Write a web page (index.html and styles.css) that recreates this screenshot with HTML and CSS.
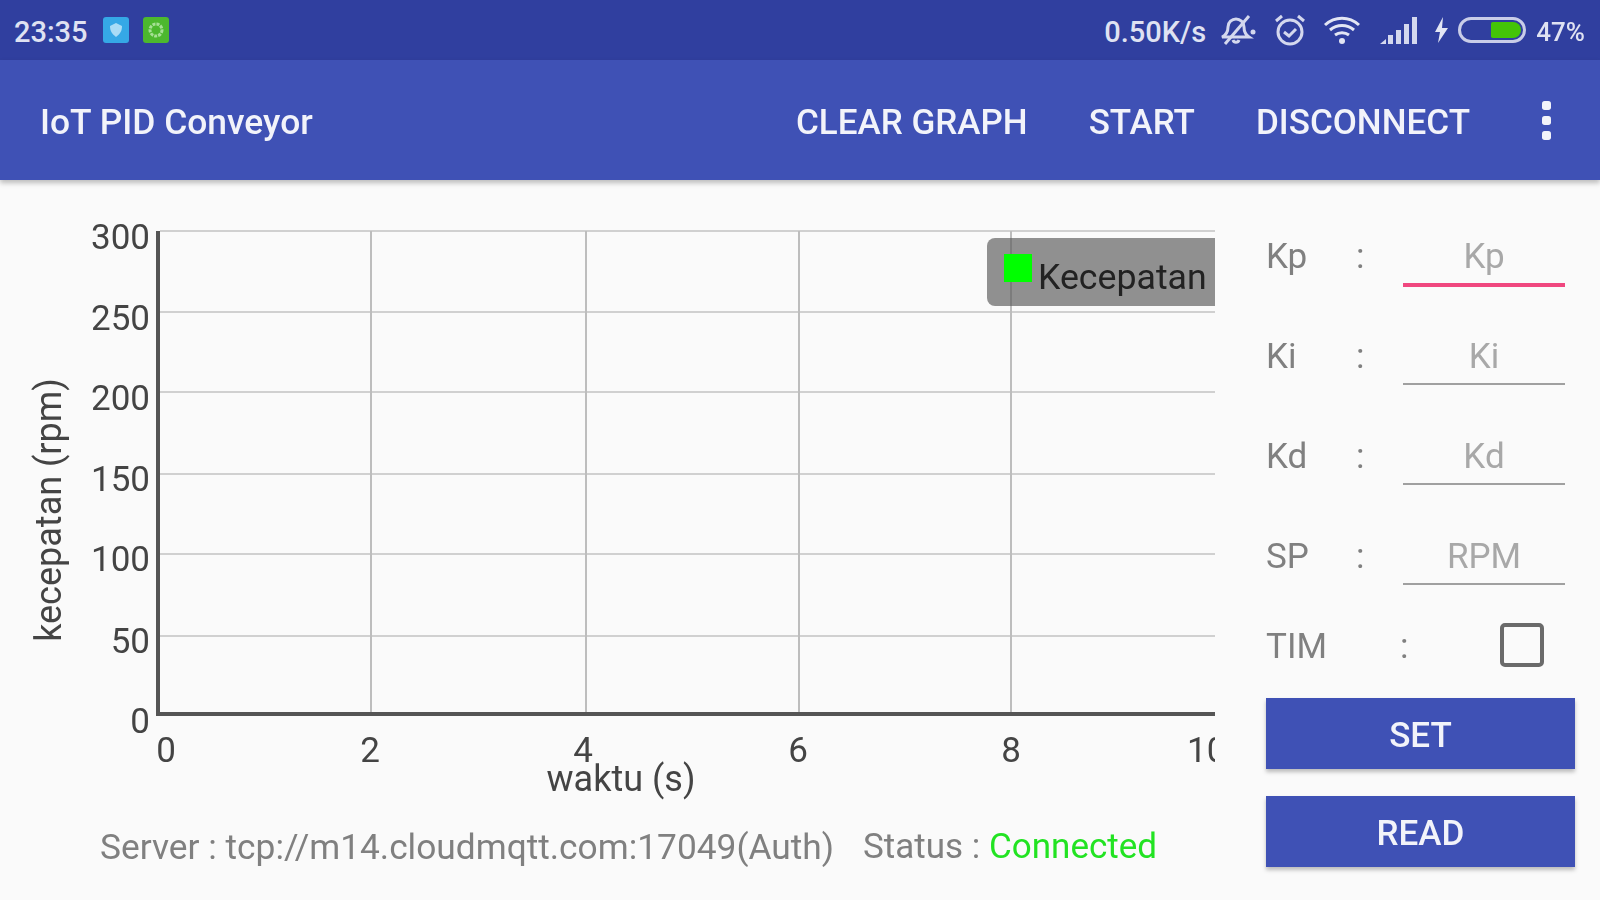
FILE: index.html

```html
<!DOCTYPE html>
<html lang="en">
<head>
    <meta charset="UTF-8">
    <title>IoT PID Conveyor</title>
    <link rel="stylesheet" href="styles.css">
</head>
<body>
    <div class="statusbar">
        <span class="clock">23:35</span>
        <svg class="notif" width="26" height="26" viewBox="0 0 26 26">
            <rect width="26" height="26" rx="3" fill="#35a8e6"/>
            <path d="M7 9l6-3 6 3c0 5-2 8-6 11-4-3-6-6-6-11z" fill="#a9dcf6"/>
        </svg>
        <svg class="notif" width="26" height="26" viewBox="0 0 26 26">
            <rect width="26" height="26" rx="3" fill="#4cb82e"/>
            <circle cx="13" cy="13" r="6" fill="none" stroke="#a5e094" stroke-width="3" stroke-dasharray="3 1"/>
        </svg>
        <div class="status-right">
            <span class="speed">0.50K/s</span>
            <svg width="38" height="34" viewBox="0 0 38 34" fill="none" stroke="#d4d8ee" stroke-width="3">
                <path d="M3 24c4-2 6-5 6-10 0-5 4-8 8-8s8 3 8 8c0 5 2 8 5 10z"/>
                <path d="M14 27c1 3 5 3 6 0"/>
                <path d="M6 31L30 3"/>
                <circle cx="34" cy="19" r="2.5" fill="#d4d8ee" stroke="none"/>
            </svg>
            <svg width="34" height="34" viewBox="0 0 34 34" fill="none" stroke="#d4d8ee" stroke-width="3">
                <circle cx="17" cy="19" r="12"/>
                <path d="M11 19l5 4 7-7"/>
                <path d="M3 8l6-5M31 8l-6-5"/>
            </svg>
            <svg class="wifi" width="38" height="30" viewBox="0 0 38 30" fill="none" stroke="#e3e6f4" stroke-width="3">
                <path d="M2 10c10-9 24-9 34 0"/>
                <path d="M7 15c7-6 17-6 24 0"/>
                <path d="M12 20c4-3 10-3 14 0"/>
                <circle cx="19" cy="26" r="3" fill="#e3e6f4" stroke="none"/>
            </svg>
            <svg width="38" height="28" viewBox="0 0 38 28" fill="#d4d8ee">
                <path d="M0 28l6-5v5z"/>
                <rect x="8" y="19" width="5" height="9"/>
                <rect x="16" y="14" width="5" height="14"/>
                <rect x="24" y="8" width="5" height="20"/>
                <rect x="32" y="1" width="5" height="27"/>
            </svg>
            <svg class="bolt" width="15" height="26" viewBox="0 0 15 26" fill="#e3e6f4">
                <path d="M9 0L1 15h5l-2 11 10-15H8z"/>
            </svg>
            <div class="battery"><div class="battery-level"></div></div>
            <span class="percent">47%</span>
        </div>
    </div>

    <div class="appbar">
        <span class="app-title">IoT PID Conveyor</span>
        <div class="actions">
            <span>CLEAR GRAPH</span>
            <span>START</span>
            <span>DISCONNECT</span>
        </div>
        <div class="overflow"><i></i><i></i><i></i></div>
    </div>

    <div class="main">
        <div class="chart-col">
            <!-- viewBox uses page coordinates, the svg edge clips the last label -->
            <svg class="chart" width="1215" height="620" viewBox="0 190 1215 620">
                <g class="grid-h">
                    <line x1="160" y1="231" x2="1215" y2="231"/>
                    <line x1="160" y1="312" x2="1215" y2="312"/>
                    <line x1="160" y1="392" x2="1215" y2="392"/>
                    <line x1="160" y1="474" x2="1215" y2="474"/>
                    <line x1="160" y1="554" x2="1215" y2="554"/>
                    <line x1="160" y1="636" x2="1215" y2="636"/>
                </g>
                <g class="grid-v">
                    <line x1="371" y1="231" x2="371" y2="714"/>
                    <line x1="586" y1="231" x2="586" y2="714"/>
                    <line x1="799" y1="231" x2="799" y2="714"/>
                    <line x1="1011" y1="231" x2="1011" y2="714"/>
                </g>
                <path class="axis" d="M158 231V714H1215"/>
                <g class="tick tick-y">
                    <text x="150" y="249">300</text>
                    <text x="150" y="330">250</text>
                    <text x="150" y="410">200</text>
                    <text x="150" y="491">150</text>
                    <text x="150" y="571">100</text>
                    <text x="150" y="653">50</text>
                    <text x="150" y="733">0</text>
                </g>
                <g class="tick tick-x">
                    <text x="166" y="762">0</text>
                    <text x="370" y="762">2</text>
                    <text x="583" y="762">4</text>
                    <text x="798" y="762">6</text>
                    <text x="1011" y="762">8</text>
                    <text x="1187" y="762" class="start">10</text>
                </g>
                <text class="axis-title" x="621" y="791">waktu (s)</text>
                <text class="axis-title" transform="translate(61 510) rotate(-90)">kecepatan (rpm)</text>
                <path class="legend" d="M1215 238H995a8 8 0 0 0-8 8v52a8 8 0 0 0 8 8h220z"/>
                <line class="grid-over" x1="1011" y1="238" x2="1011" y2="306"/>
                <rect x="1004" y="254" width="28" height="28" fill="#00ff00"/>
                <text class="legend-text" x="1038" y="289">Kecepatan</text>
            </svg>
            <div class="server">
                <span>Server : tcp://m14.cloudmqtt.com:17049(Auth)</span>
                <span class="conn-status">Status : <span class="connected">Connected</span></span>
            </div>
        </div>

        <div class="side">
            <div class="field">
                <span class="field-label">Kp</span>
                <span class="colon">:</span>
                <div class="input input-active">Kp</div>
            </div>
            <div class="field">
                <span class="field-label">Ki</span>
                <span class="colon">:</span>
                <div class="input">Ki</div>
            </div>
            <div class="field">
                <span class="field-label">Kd</span>
                <span class="colon">:</span>
                <div class="input">Kd</div>
            </div>
            <div class="field">
                <span class="field-label">SP</span>
                <span class="colon">:</span>
                <div class="input">RPM</div>
            </div>
            <div class="field-check">
                <span class="check-label">TIM</span>
                <span class="colon">:</span>
                <div class="checkbox"></div>
            </div>
            <div class="btn btn-set">SET</div>
            <div class="btn btn-read">READ</div>
        </div>
    </div>
</body>
</html>
```

FILE: styles.css

```css
body {
    margin: 0;
    width: 1600px;
    height: 900px;
    overflow: hidden;
    background-color: #fafafa;
    font-family: Roboto, "Liberation Sans", sans-serif;
    color: #808080;
    filter: blur(0.7px);
}
.statusbar {
    height: 60px;
    background-color: #303f9f;
    color: #dfe2f2;
    display: flex;
    align-items: center;
    padding: 0 15px 0 14px;
    box-sizing: border-box;
}
.clock {
    font-size: 29px;
    font-weight: 500;
    margin-right: 15px;
    padding-top: 3px;
}
.notif {
    margin-right: 14px;
}
.status-right {
    margin-left: auto;
    display: flex;
    align-items: center;
    gap: 16px;
}
.speed {
    font-size: 29px;
    font-weight: 500;
    padding-top: 3px;
    margin-right: -3px;
}
.wifi {
    margin-right: 3px;
}
.bolt {
    margin-right: -7px;
}
.battery {
    width: 68px;
    height: 26px;
    box-sizing: border-box;
    border: 3px solid #c9cde8;
    border-radius: 13px;
    padding: 2px;
    display: flex;
    justify-content: flex-end;
}
.battery-level {
    width: 30px;
    background-color: #44c408;
    border-radius: 2px 9px 9px 2px;
}
.percent {
    font-size: 26px;
    font-weight: 500;
    margin-left: -6px;
    padding-top: 3px;
}
.appbar {
    height: 120px;
    background-color: #3f51b5;
    color: #f2f3fa;
    display: flex;
    align-items: center;
    padding-left: 40px;
    box-shadow: 0 3px 5px rgba(0, 0, 0, 0.25);
    font-size: 35.4px;
    font-weight: 500;
    position: relative;
}
.app-title {
    padding-top: 4px;
}
.actions {
    margin-left: auto;
    display: flex;
    gap: 61px;
    padding-top: 4px;
    font-size: 35px;
}
.overflow {
    width: 108px;
    margin-left: 22px;
    display: flex;
    flex-direction: column;
    align-items: center;
    gap: 6px;
}
.overflow i {
    width: 9px;
    height: 9px;
    border-radius: 30%;
    background-color: #f2f3fa;
}
.main {
    display: flex;
    height: 720px;
}
.chart-col {
    width: 1215px;
    padding-top: 10px;
}
.chart {
    display: block;
}
.grid-h line {
    stroke: #d0d0d0;
    stroke-width: 2;
}
.grid-v line {
    stroke: #bdbdbd;
    stroke-width: 2;
}
.axis {
    fill: none;
    stroke: #555;
    stroke-width: 4;
}
.tick {
    font-size: 35px;
    fill: #444;
}
.tick-y {
    text-anchor: end;
}
.tick-x {
    text-anchor: middle;
}
.tick-x .start {
    text-anchor: start;
}
.axis-title {
    font-size: 36px;
    fill: #444;
    text-anchor: middle;
}
.legend {
    fill: #909090;
}
.grid-over {
    stroke: #7c7c7c;
    stroke-width: 2;
}
.legend-text {
    font-size: 35.7px;
    fill: #222;
}
.server {
    display: flex;
    gap: 29px;
    padding: 16px 0 0 100px;
    font-size: 35.3px;
    white-space: nowrap;
}
.conn-status {
    font-size: 35px;
}
.connected {
    color: #22e322;
}
.side {
    width: 309px;
    margin-left: 51px;
    padding-top: 5px;
}
.field {
    height: 100px;
    display: flex;
    align-items: flex-end;
    font-size: 35px;
}
.field-label {
    width: 90px;
    padding-bottom: 8px;
}
.colon {
    width: 47px;
    padding-bottom: 8px;
}
.input {
    width: 162px;
    box-sizing: border-box;
    text-align: center;
    border-bottom: 2px solid #a0a0a0;
    padding-bottom: 6px;
    color: #a8a8a8;
}
.input-active {
    border-bottom: 4px solid #f0477f;
    margin-bottom: -2px;
}
.field-check {
    display: flex;
    align-items: center;
    height: 113px;
    box-sizing: border-box;
    padding-top: 7px;
    font-size: 35px;
}
.check-label {
    width: 134px;
    padding-top: 3px;
}
.field-check .colon {
    padding: 3px 0 0;
    width: 100px;
}
.checkbox {
    width: 44px;
    height: 44px;
    box-sizing: border-box;
    border: 4px solid #6a6a6a;
    border-radius: 5px;
}
.btn {
    height: 71px;
    box-sizing: border-box;
    padding-top: 4px;
    background-color: #3f51b5;
    color: #f2f3fa;
    display: flex;
    align-items: center;
    justify-content: center;
    font-size: 35px;
    font-weight: 500;
    box-shadow: 0 3px 4px rgba(0, 0, 0, 0.25);
}
.btn-read {
    margin-top: 27px;
}
```
